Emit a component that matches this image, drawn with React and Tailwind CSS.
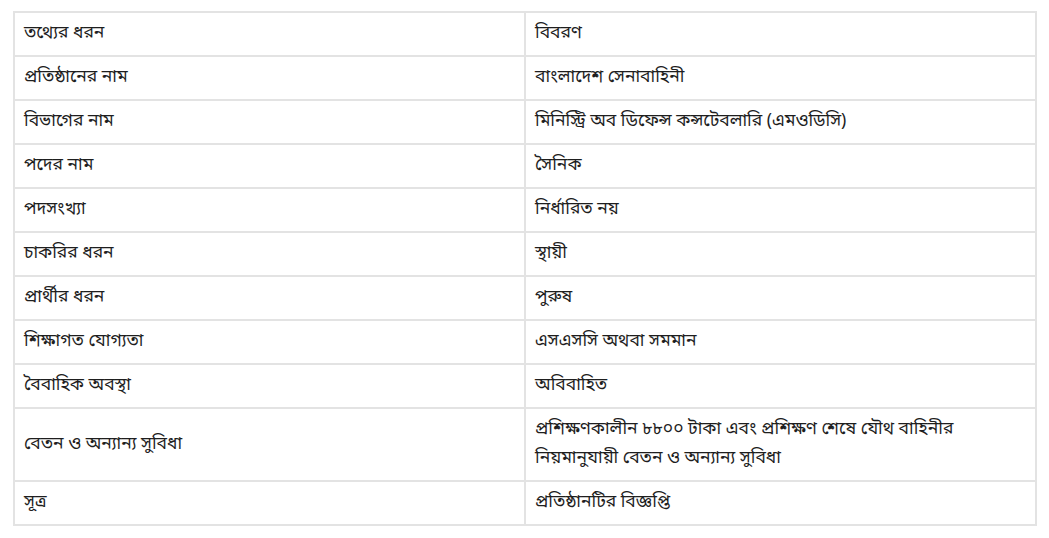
export default function App() {
  const rows = [
    ["তথ্যের ধরন", "বিবরণ"],
    ["প্রতিষ্ঠানের নাম", "বাংলাদেশ সেনাবাহিনী"],
    ["বিভাগের নাম", "মিনিস্ট্রি অব ডিফেন্স কন্সটেবলারি (এমওডিসি)"],
    ["পদের নাম", "সৈনিক"],
    ["পদসংখ্যা", "নির্ধারিত নয়"],
    ["চাকরির ধরন", "স্থায়ী"],
    ["প্রার্থীর ধরন", "পুরুষ"],
    ["শিক্ষাগত যোগ্যতা", "এসএসসি অথবা সমমান"],
    ["বৈবাহিক অবস্থা", "অবিবাহিত"],
    ["বেতন ও অন্যান্য সুবিধা", "প্রশিক্ষণকালীন ৮৮০০ টাকা এবং প্রশিক্ষণ শেষে যৌথ বাহিনীর নিয়মানুযায়ী বেতন ও অন্যান্য সুবিধা"],
    ["সূত্র", "প্রতিষ্ঠানটির বিজ্ঞপ্তি"],
  ];
  return (
    <div className="bg-white w-[1049px] h-[538px] pt-[11px] pl-[13px]" style={{ fontFamily: '"Noto Sans Bengali", "Lohit Bengali", "Noto Sans", sans-serif' }}>
      <table className="w-[1024px] border-collapse table-fixed text-[17.5px] text-[#1e1e1e]">
        <tbody>
          {rows.map(([a, b], i) => (
            <tr key={i}>
              <td className="border-2 border-[#e3e3e3] pl-[9px] pr-[40px] pt-[6px] pb-[7px] leading-[29px] align-middle w-1/2">{a}</td>
              <td className="border-2 border-[#e3e3e3] pl-[9px] pr-[40px] pt-[6px] pb-[7px] leading-[29px] align-middle w-1/2">{b}</td>
            </tr>
          ))}
        </tbody>
      </table>
    </div>
  );
}
